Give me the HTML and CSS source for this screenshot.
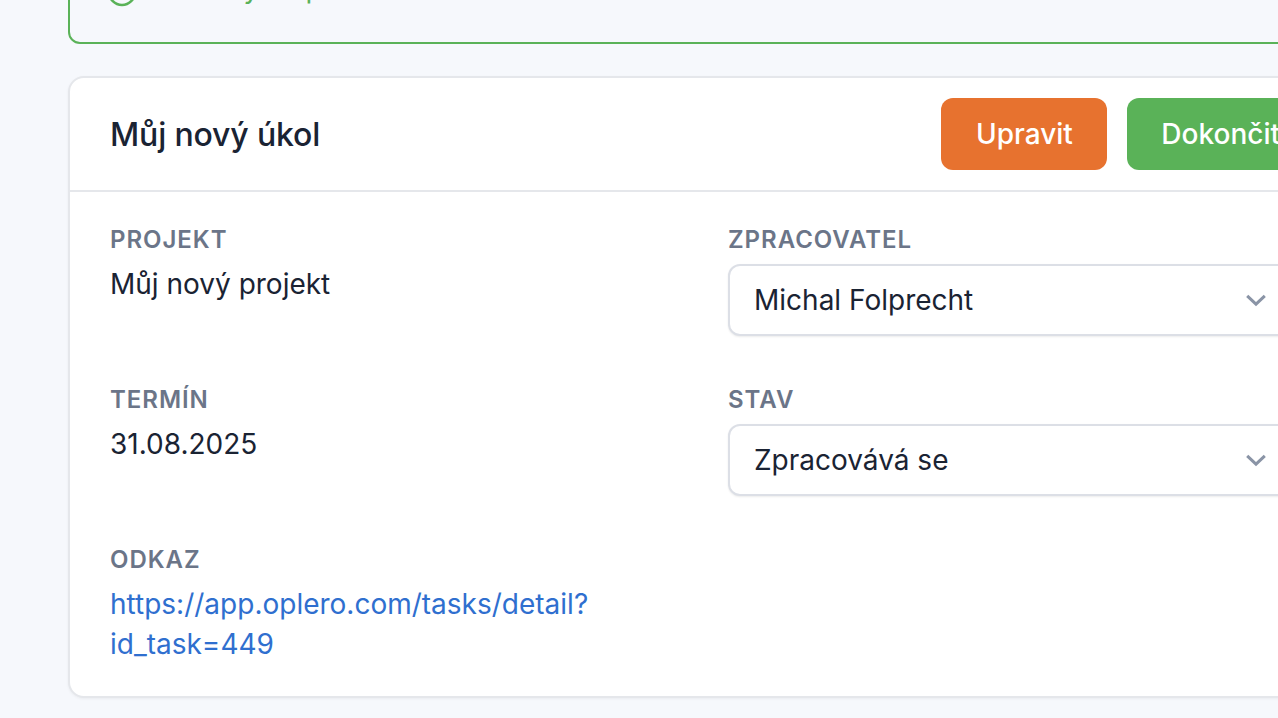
FILE: index.html
```html
<!DOCTYPE html>
<html lang="cs">
<head>
<meta charset="utf-8">
<title>Můj nový úkol</title>
<link rel="stylesheet" href="styles.css">
</head>
<body>
<main class="page">
  <div class="alert">
    <svg class="alert-icon" width="32" height="32" viewBox="0 0 32 32" fill="none"><circle cx="16" cy="16" r="13" stroke="#5ab258" stroke-width="2.6"/></svg>
    <span class="alert-text">Úkol byl úspěšně aktualizován.</span>
  </div>
  <section class="card">
    <header class="card-head">
      <h1 class="title">Můj nový úkol</h1>
      <div class="actions">
        <button class="btn btn-orange">Upravit</button>
        <button class="btn btn-green">Dokončit</button>
      </div>
    </header>
    <div class="card-body">
      <div class="field">
        <div class="label">Projekt</div>
        <div class="value">Můj nový projekt</div>
      </div>
      <div class="field">
        <div class="label">Zpracovatel</div>
        <div class="select"><span>Michal Folprecht</span>
          <svg class="chev" width="24" height="24" viewBox="0 0 24 24" fill="none"><path d="M3.2 7.8l8.8 8.4 8.8-8.4" stroke="#8a94a6" stroke-width="3"/></svg>
        </div>
      </div>
      <div class="field">
        <div class="label">Termín</div>
        <div class="value">31.08.2025</div>
      </div>
      <div class="field">
        <div class="label">Stav</div>
        <div class="select"><span>Zpracovává se</span>
          <svg class="chev" width="24" height="24" viewBox="0 0 24 24" fill="none"><path d="M3.2 7.8l8.8 8.4 8.8-8.4" stroke="#8a94a6" stroke-width="3"/></svg>
        </div>
      </div>
      <div class="field">
        <div class="label">Odkaz</div>
        <a class="link" href="#">https://app.oplero.com/tasks/detail?<br>id_task=449</a>
      </div>
    </div>
  </section>
</main>
</body>
</html>
```
FILE: styles.css
```css
* { box-sizing: border-box; }
html, body { margin: 0; height: 100%; overflow: hidden; }
body { background: #f6f8fc; font-family: Inter, "Liberation Sans", sans-serif; color: #1a2333; }
.page { width: 1356px; margin-top: -60px; padding-left: 68px; display: flex; flex-direction: column; gap: 32px; }
.alert { height: 104px; border: 2px solid #5ab258; border-radius: 12px; display: flex; align-items: center; gap: 22px; padding: 0 36px; color: #5ab258; font-size: 28px; }
.alert-icon { flex: none; }
.alert-text { margin-bottom: 8px; }
.card { background: #fff; border: 2px solid #e5e7eb; border-radius: 16px; box-shadow: 0 1px 3px rgba(0,0,0,.05); }
.card-head { height: 114px; border-bottom: 2px solid #e5e7eb; display: flex; align-items: center; justify-content: space-between; padding: 0 40px; }
.title { margin: 0; font-size: 32px; font-weight: 500; letter-spacing: -0.15px; }
.actions { display: flex; gap: 20px; }
.btn { height: 72px; border: 0; border-radius: 12px; color: #fff; font: 500 28px Inter, sans-serif; padding: 0 34px; }
.btn-orange { background: #e7722f; padding: 0 34.5px; }
.btn-green { background: #5ab258; }
.card-body { display: grid; grid-template-columns: 592px 592px; column-gap: 26px; row-gap: 48px; padding: 32px 40px; }
.label { font-size: 24px; font-weight: 600; letter-spacing: 0.96px; text-transform: uppercase; color: #6b7588; line-height: 32px; }
.value { font-size: 28px; line-height: 40px; margin-top: 8px; }
.link { display: block; font-size: 28px; line-height: 40px; margin-top: 8px; color: #2f6fcf; text-decoration: none; }
.select { height: 72px; margin-top: 8px; border: 2px solid #dcdfe6; border-radius: 12px; background: #fff; box-shadow: 0 1px 2px rgba(0,0,0,.08); display: flex; align-items: center; justify-content: space-between; padding: 0 50px 0 24px; font-size: 28px; }
.chev { flex: none; }
```
